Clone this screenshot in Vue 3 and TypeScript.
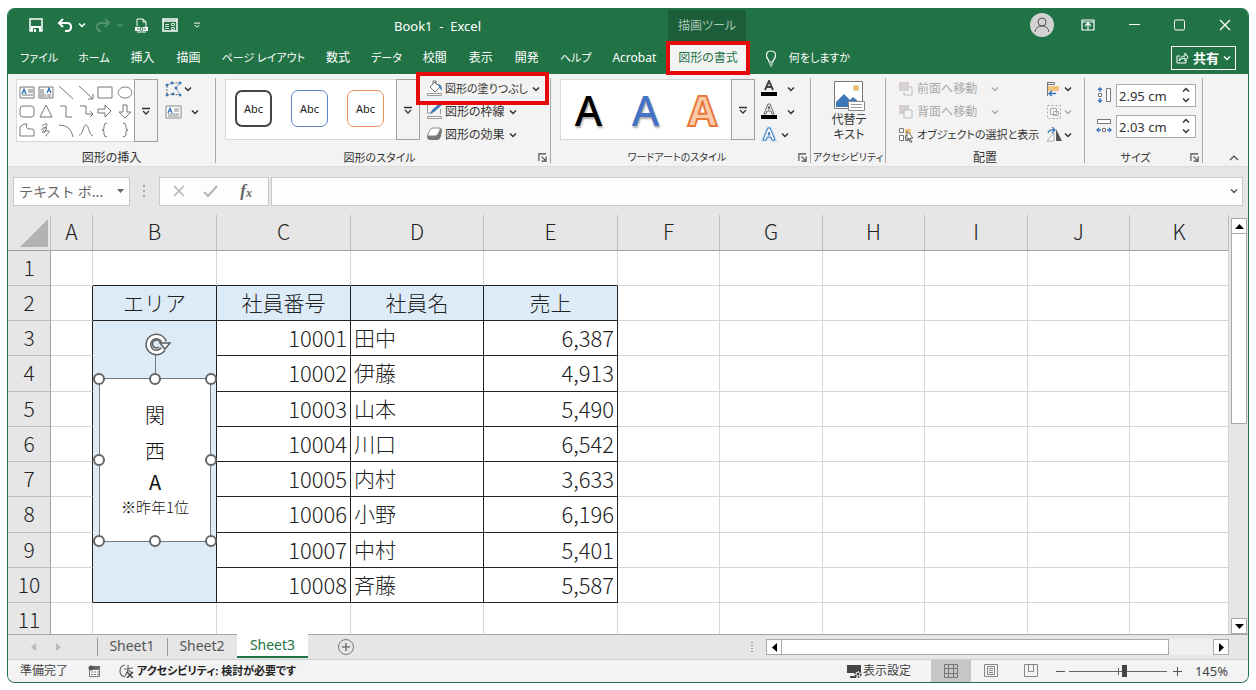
<script setup lang="ts">
import { ref } from 'vue'

interface Row { id: number; name: string; sales: string }
interface Tab { label: string; kana?: boolean }

const tabs: Tab[] = [
  { label: 'ファイル', kana: true }, { label: 'ホーム', kana: true }, { label: '挿入' }, { label: '描画' },
  { label: 'ページ レイアウト', kana: true }, { label: '数式' }, { label: 'データ', kana: true }, { label: '校閲' },
  { label: '表示' }, { label: '開発' }, { label: 'ヘルプ', kana: true }, { label: 'Acrobat' }, { label: '図形の書式' },
]
const activeTab = ref('図形の書式')
const sheets: string[] = ['Sheet1', 'Sheet2', 'Sheet3']
const activeSheet = ref('Sheet3')
const columns: string[] = ['A', 'B', 'C', 'D', 'E', 'F', 'G', 'H', 'I', 'J', 'K']
const headings: string[] = ['エリア', '社員番号', '社員名', '売上']
const rows: Row[] = [
  { id: 10001, name: '田中', sales: '6,387' },
  { id: 10002, name: '伊藤', sales: '4,913' },
  { id: 10003, name: '山本', sales: '5,490' },
  { id: 10004, name: '川口', sales: '6,542' },
  { id: 10005, name: '内村', sales: '3,633' },
  { id: 10006, name: '小野', sales: '6,196' },
  { id: 10007, name: '中村', sales: '5,401' },
  { id: 10008, name: '斉藤', sales: '5,587' },
]
const shapes: string[] = [
  'M1 3h14v11H1zM9 6h5M9 8h5M3 11h11', 'M1 3h14v11H1zM3 5v8M5 5v8M7 10v3M10 10v3M12 10v3', 'M1 2l14 13', 'M1 2l13 12M15 10v5h-5', 'M1 3h14v11H1z', 'M8 3c9 0 9 11 0 11s-9-11 0-11z',
  'M4 3h8q3 0 3 3v5q0 3-3 3H4q-3 0-3-3V6q0-3 3-3z', 'M8 2l6 12H2z', 'M2 3h6v11h6', 'M2 3h6v8h6M12 8l3 3-3 3', 'M1 6h7V2l6 6-6 6v-4H1z', 'M6 2h4v7h4l-6 6-6-6h4z',
  'M1 14V5l4-3h3q-2 5 3 5 4-1 4 2v5z', 'M4 4c8-6 5 1 1 5s8-3 6 1-5 3-2 4M3 8c5-5 8-3 3 3', 'M1 3q12 0 14 12', 'M1 13c4 0 4-10 7-10s3 11 7 11', 'M10 1q-3 0-3 3v2q0 2-2 2 2 0 2 2v2q0 3 3 3', 'M6 1q3 0 3 3v2q0 2 2 2-2 0-2 2v2q0 3-3 3',
]
const shapeHeight = ref('2.95 cm')
const shapeWidth = ref('2.03 cm')
const zoom = ref(145)
const handles: string[] = ['nw', 'n', 'ne', 'w', 'e', 'sw', 's', 'se']
</script>

<template>
  <svg class="defs" aria-hidden="true">
    <symbol id="chev" viewBox="0 0 8 8"><path d="M1 2.500l3 3 3-3" fill="none" stroke="currentColor" stroke-width="1.500" /></symbol>
    <symbol id="more" viewBox="0 0 8 8"><path d="M0 1.500h8M1 4l3 3 3-3" fill="none" stroke="currentColor" stroke-width="1.300" /></symbol>
    <symbol id="launch" viewBox="0 0 10 10"><path d="M1 9V1h8M4 4l4 4M9 4v5H4" fill="none" stroke="#444" stroke-width="1.200" /></symbol>
  </svg>
  <div class="window">
    <header class="titlebar">
      <div class="quick">
        <button aria-label="上書き保存"><svg width="14" height="14"><path d="M1 1h12v12H1z" fill="none" stroke="#fff" stroke-width="1.500" /><path d="M2 8h10v5H2z" fill="#fff" /><path d="M4 10h6v4H4z" fill="#217346" /><path d="M5 11h2v3H5z" fill="#fff" /></svg></button>
        <button aria-label="元に戻す"><svg width="16" height="14"><path d="M2 5h8q4 0 4 4t-4 4H8M6 1L2 5l4 4" fill="none" stroke="#fff" stroke-width="2" /></svg><svg class="chev"><use href="#chev" /></svg></button>
        <button class="redo" aria-label="やり直し" disabled><svg width="16" height="14"><path d="M14 5H6Q2 5 2 9t4 4M10 1l4 4-4 4" fill="none" stroke="currentColor" stroke-width="2" /></svg><svg class="chev"><use href="#chev" /></svg></button>
        <button class="pdf" aria-label="PDF"><svg width="13" height="15"><path d="M2 8V1h6l3 3v6M8 1v3h3M2 14h9" fill="none" stroke="#fff" /><path d="M0 9h13v4H0z" fill="#fff" /><path d="M2 11h2M9 11h2" stroke="#217346" /><circle cx="6.500" cy="11" r="1.500" fill="none" stroke="#217346" /></svg></button>
        <button aria-label="フォーム"><svg width="16" height="14"><path d="M1 1h14v12H1zM1 3h14" fill="none" stroke="#fff" stroke-width="1.500" /><path d="M3 6.500h4M3 8.500h4M3 10.500h4M9.500 5.500h3v2h-3zM9.500 9.500h3v2h-3z" fill="none" stroke="#fff" stroke-width=".8" /></svg></button>
        <button class="custom" aria-label="カスタマイズ"><svg class="tiny"><use href="#more" /></svg></button>
      </div>
      <div class="doc">Book1&nbsp; -&nbsp; Excel</div>
      <div class="context">描画ツール</div>
      <div class="winctl">
        <button class="avatar" aria-label="アカウント"><svg width="24" height="24"><circle cx="12" cy="12" r="12" fill="#d2d2d2" /><circle cx="12" cy="9" r="4" fill="none" stroke="#555" /><path d="M5 19q1-6 7-6t7 6" fill="none" stroke="#555" /></svg></button>
        <button aria-label="リボンの表示"><svg width="14" height="12"><path d="M1 1h12v10H1zM1 3h12M7 11V5M4 7l3-3 3 3" fill="none" stroke="#fff" stroke-width="1.200" /></svg></button>
        <button aria-label="最小化"><svg width="11" height="12"><path d="M0 5.500h11" stroke="#fff" /></svg></button>
        <button aria-label="最大化"><svg width="11" height="12"><rect x=".5" y="1" width="10" height="10" rx="1.500" fill="none" stroke="#fff" /></svg></button>
        <button aria-label="閉じる"><svg width="12" height="12"><path d="M1 1l10 10M11 1L1 11" stroke="#fff" stroke-width="1.300" /></svg></button>
      </div>
    </header>

    <nav class="tabs">
      <button v-for="t in tabs" :key="t.label" class="tab" :class="{ active: t.label === activeTab, kana: t.kana }" @click="activeTab = t.label">{{ t.label }}</button>
      <button class="tell"><svg width="12" height="17"><path d="M4 12q0-2-2-4-2-7 4-7t4 7q-2 2-2 4zM4 14h4M5 16h2" fill="none" stroke="#fff" stroke-width="1.200" /></svg>何をしますか</button>
      <button class="share"><svg width="13" height="12"><path d="M4 4H1v7h9V8M3 9q1-5 6-5V1l3 4-3 4V6Q5 6 3 9z" fill="none" stroke="#fff" /></svg>共有<svg class="chev"><use href="#chev" /></svg></button>
    </nav>

    <section class="ribbon">
      <div class="group g-insert">
        <div class="body">
          <div class="gallery">
            <div class="shapes">
              <button v-for="(s, i) in shapes" :key="i" :aria-label="'図形 ' + (i + 1)">
                <svg width="16" height="16" viewBox="0 0 16 16"><path :d="s" fill="none" stroke="#777" />
                  <path v-if="i === 0" d="M3 10l2-5 2 5M4 8h2" fill="none" stroke="#2e75b6" stroke-width="1.200" />
                  <path v-if="i === 1" d="M9 9l2-5 2 5M10 7h2" fill="none" stroke="#2e75b6" stroke-width="1.200" /></svg>
              </button>
            </div>
            <button class="expand" aria-label="その他の図形"><svg class="more"><use href="#more" /></svg></button>
          </div>
          <div class="stack edit">
            <button aria-label="図形の編集"><svg width="17" height="16"><path d="M2 4l5-2h8l-4 5 4 7-7-1-6 1z" fill="none" stroke="#777" stroke-dasharray="2 1" /><path d="M1 3h2v2H1zM6 1h2v2H6zM14 1h2v2h-2zM10 6h2v2h-2zM1 13h2v2H1zM7 12h2v2H7zM14 13h2v2h-2z" fill="#3b78b5" stroke="#3b78b5" stroke-width=".6" /></svg><svg class="chev"><use href="#chev" /></svg></button>
            <button class="textbox" aria-label="テキスト ボックス"><svg width="17" height="14"><path d="M1 1h15v12H1zM9 4h5M9 6h5M3 9h11M3 11h11" fill="#fff" stroke="#888" /><path d="M3 8l2-5 2 5M4 6h2" fill="none" stroke="#2e75b6" stroke-width="1.200" /></svg><svg class="chev"><use href="#chev" /></svg></button>
          </div>
        </div>
        <div class="caption"><span>図形の挿入</span></div>
      </div>

      <div class="group g-style">
        <div class="body">
          <div class="gallery">
            <div class="styles"><button class="abc dark">Abc</button><button class="abc blue">Abc</button><button class="abc orange">Abc</button></div>
            <button class="expand" aria-label="その他のスタイル"><svg class="more"><use href="#more" /></svg></button>
          </div>
          <div class="stack lines">
            <button class="marked compact"><svg width="18" height="17"><path d="M4 7l5-5 5 5-5 5zM7 4V1h3v4" fill="#fff" stroke="#777" /><path d="M12 4q4 0 4 7l-3-4z" fill="#3b78b5" /><path d="M1.500 13.500h14v2h-14z" fill="#fff" stroke="#999" /></svg>図形の塗りつぶし<svg class="chev"><use href="#chev" /></svg></button>
            <button><svg width="18" height="17"><path d="M1.500 2v8h5M14.500 6v5" fill="none" stroke="#999" /><path d="M4 11l2-4 8-7 2 2-8 7z" fill="#3b78b5" /><path d="M1.500 13.500h14v2h-14z" fill="#fff" stroke="#999" /></svg>図形の枠線<svg class="chev"><use href="#chev" /></svg></button>
            <button><svg width="18" height="17"><path d="M6 2h8q2 0 2 3l-1 5q-1 4-4 4H4q-3 0-3-4z" fill="#777" /><path d="M6 2h7q2 0 1 2l-2 4q-1 2-3 2H3q-2 0-1-2l2-4q1-2 2-2z" fill="#fff" stroke="#888" /></svg>図形の効果<svg class="chev"><use href="#chev" /></svg></button>
          </div>
        </div>
        <div class="caption compact"><span>図形のスタイル</span><button aria-label="図形の書式設定"><svg class="launch"><use href="#launch" /></svg></button></div>
      </div>

      <div class="group g-art">
        <div class="body">
          <div class="gallery">
            <div class="styles art"><button class="wa black">A</button><button class="wa blue">A</button><button class="wa orange">A</button></div>
            <button class="expand" aria-label="その他のワードアート"><svg class="more"><use href="#more" /></svg></button>
          </div>
          <div class="stack fx">
            <button aria-label="文字の塗りつぶし"><svg width="18" height="17"><path d="M5 10l4-9 4 9M6 7h6" fill="none" stroke="#444" stroke-width="2" /><path d="M1 12h16v4H1z" /></svg><svg class="chev"><use href="#chev" /></svg></button>
            <button aria-label="文字の輪郭"><svg width="18" height="17"><path d="M4 11l4-10h2l4 10h-2l-1-3H7l-1 3zM8 6l1-3 1 3z" fill="#fff" stroke="#666" /><path d="M1 12h16v4H1z" /></svg><svg class="chev"><use href="#chev" /></svg></button>
            <button class="near" aria-label="文字の効果"><svg width="18" height="17"><path d="M3 14L8 2h2l5 12h-3l-1-3H7l-1 3zM8 9l1-3 1 3z" fill="#fff" stroke="#b8d6f2" stroke-width="3" /><path d="M3 14L8 2h2l5 12h-3l-1-3H7l-1 3zM8 9l1-3 1 3z" fill="#fff" stroke="#3b78b5" /></svg><svg class="chev"><use href="#chev" /></svg></button>
          </div>
        </div>
        <div class="caption small"><span>ワードアートのスタイル</span><button aria-label="文字の書式設定"><svg class="launch"><use href="#launch" /></svg></button></div>
      </div>

      <div class="group g-alt">
        <div class="body">
          <button class="alt"><svg width="32" height="32"><path d="M1.500 1.500h28v27h-28z" fill="#fff" stroke="#777" /><circle cx="23" cy="8" r="3" fill="#e9b96e" /><path d="M3 27v-5l8-8 6 6 3-3 6 5v5z" fill="#3b78b5" /><path d="M15.500 21.500h16v9h-16z" fill="#fff" stroke="#888" /><path d="M18 24.500h11M18 27.500h11" stroke="#999" /></svg><span>代替テ</span><span>キスト</span></button>
        </div>
        <div class="caption small"><span>アクセシビリティ</span></div>
      </div>

      <div class="group g-arrange">
        <div class="body">
          <div class="stack lines">
            <button disabled><svg width="18" height="16"><path d="M9 6h5v8H6v-3" fill="none" stroke="#bbb" /><path d="M1 1h10v9H1z" fill="#d6d0d6" /></svg><span class="wide">前面へ移動</span><svg class="chev"><use href="#chev" /></svg></button>
            <button disabled><svg width="18" height="16"><path d="M1 1h10v9H1z" fill="#d6d0d6" /><path d="M6 6h8v8H6z" fill="#f3f3f3" stroke="#bbb" /></svg><span class="wide">背面へ移動</span><svg class="chev"><use href="#chev" /></svg></button>
            <button class="compact"><svg width="18" height="16"><path d="M7 2h6v5H7z" fill="#f0c47c" /><path d="M1.500 1.500h4v4h-4zM1.500 8.500h4v5h-4zM7.500 8.500h3v5h-3z" fill="#fff" stroke="#777" /><path d="M9 4l6 7h-3l2 4h-2l-1-4-2 2z" fill="#fff" stroke="#666" /></svg>オブジェクトの選択と表示</button>
          </div>
          <div class="stack fx">
            <button aria-label="配置"><svg width="16" height="16"><path d="M1.500 1v14M1.500 1.500h7v2h-7" fill="none" stroke="#777" /><path d="M2 5h11v5H2z" fill="#f0c47c" /><path d="M3 12.500h7M6 10l-3 2.500L6 15" fill="none" stroke="#3b78b5" stroke-width="1.500" /></svg><svg class="chev"><use href="#chev" /></svg></button>
            <button disabled aria-label="グループ化"><svg width="16" height="16"><path d="M1.500 1.500h13v13h-13z" fill="none" stroke="#aaa" stroke-dasharray="2 2" /><path d="M4.500 4.500h6v6h-6zM7.500 7.500h5v4h-5z" fill="none" stroke="#aaa" /></svg><svg class="chev"><use href="#chev" /></svg></button>
            <button aria-label="回転"><svg width="16" height="16"><path d="M10 2v12h6z" fill="#555" /><path d="M8 6v8H1z" fill="#fff" stroke="#aaa" /><path d="M2 6q1-4 6-3M6 0l3 3-3 3" fill="none" stroke="#3b78b5" stroke-width="1.300" /></svg><svg class="chev"><use href="#chev" /></svg></button>
          </div>
        </div>
        <div class="caption"><span>配置</span></div>
      </div>

      <div class="group g-size">
        <div class="body sizes">
          <div class="size"><label for="h" aria-label="図形の高さ"><svg width="16" height="17"><path d="M10.500 1.500h4v13h-4zM2.500 6.500h3v3h-3z" fill="#fff" stroke="#777" /><path d="M4 5V1M2 3l2-2 2 2M4 11v5M2 13l2 2 2-2" fill="none" stroke="#3b78b5" stroke-width="1.300" /></svg></label>
            <div class="spin"><input id="h" v-model="shapeHeight"><div><button aria-label="高さを増やす"><svg class="chev up"><use href="#chev" /></svg></button><button aria-label="高さを減らす"><svg class="chev"><use href="#chev" /></svg></button></div></div></div>
          <div class="size"><label for="w" aria-label="図形の幅"><svg width="16" height="17"><path d="M1.500 1.500h13v4h-13zM6.500 10.500h3v3h-3z" fill="#fff" stroke="#777" /><path d="M5 12H1M3 10l-2 2 2 2M11 12h4M13 10l2 2-2 2" fill="none" stroke="#3b78b5" stroke-width="1.300" /></svg></label>
            <div class="spin"><input id="w" v-model="shapeWidth"><div><button aria-label="幅を増やす"><svg class="chev up"><use href="#chev" /></svg></button><button aria-label="幅を減らす"><svg class="chev"><use href="#chev" /></svg></button></div></div></div>
        </div>
        <div class="caption compact"><span>サイズ</span><button aria-label="サイズの設定"><svg class="launch"><use href="#launch" /></svg></button></div>
      </div>
      <button class="collapse" aria-label="リボンを折りたたむ"><svg width="10" height="6"><path d="M1 5l4-4 4 4" fill="none" stroke="#444" stroke-width="1.200" /></svg></button>
    </section>

    <section class="formula">
      <div class="namebox"><input value="テキスト ボ..." aria-label="名前ボックス"><button aria-label="名前の一覧"><svg width="7" height="5"><path d="M0 0h7L3.500 4z" fill="#666" /></svg></button></div>
      <svg class="grip" width="4" height="14"><path d="M1 1h2v2H1zM1 6h2v2H1zM1 11h2v2H1z" fill="#a5a5a5" /></svg>
      <div class="fxbox">
        <button aria-label="キャンセル"><svg width="14" height="14"><path d="M2 2l10 10M12 2L2 12" stroke="#b5b5b5" stroke-width="1.500" /></svg></button>
        <button aria-label="入力"><svg width="15" height="14"><path d="M1 8l4 4 9-10" fill="none" stroke="#b5b5b5" stroke-width="2" /></svg></button>
        <button class="fn" aria-label="関数の挿入">f<small>x</small></button>
      </div>
      <div class="fxinput"><input aria-label="数式バー"><button aria-label="数式バーの展開"><svg class="chev"><use href="#chev" /></svg></button></div>
    </section>

    <main class="work">
      <table class="grid">
        <colgroup><col class="c-row"><col class="c-a"><col class="c-b"><col class="c-data"><col class="c-d"><col class="c-data"><col v-for="n in 5" :key="n" class="c-free"><col></colgroup>
        <thead><tr><th class="corner"><svg width="28" height="28"><path d="M28 0v28H0z" fill="#b2b2b2" /></svg></th><th v-for="c in columns" :key="c">{{ c }}</th></tr></thead>
        <tbody>
          <tr><th>1</th><td v-for="(c, i) in columns" :key="c" :class="{ under: i > 0 && i < 5 }" /></tr>
          <tr><th>2</th><td class="edge" /><td v-for="h in headings" :key="h" class="data head">{{ h }}</td><td v-for="n in 6" :key="n" /></tr>
          <tr v-for="(r, i) in rows" :key="r.id">
            <th>{{ i + 3 }}</th><td class="edge" />
            <td v-if="i === 0" rowspan="8" class="data area">
              <div class="shape">
                <span class="stem" />
                <svg class="rotate" width="28" height="24"><path d="M19 17a8 8 0 1 1 1-7" fill="none" stroke="#5f5f5f" stroke-width="6" /><path d="M19 17a8 8 0 1 1 1-7" fill="none" stroke="#fff" stroke-width="3" /><path d="M16 11h10l-5 6z" fill="#fff" stroke="#5f5f5f" stroke-width="1.500" /><path d="M15 15a4 4 0 1 1 1-5" fill="none" stroke="#5f5f5f" stroke-width="1.500" /></svg>
                <p>関</p><p>西</p><p class="latin">A</p><p class="note">※昨年1位</p>
                <i v-for="p in handles" :key="p" :class="p" />
              </div>
            </td>
            <td class="data num">{{ r.id }}</td><td class="data name">{{ r.name }}</td><td class="data num">{{ r.sales }}</td><td v-for="n in 6" :key="n" />
          </tr>
          <tr class="last"><th>11</th><td v-for="c in columns" :key="c" /></tr>
        </tbody>
      </table>
      <div class="vscroll">
        <button aria-label="上へ"><svg width="9" height="5"><path d="M0 5l4.500-5L9 5z" /></svg></button>
        <div class="thumb" />
        <button aria-label="下へ"><svg width="9" height="5"><path d="M0 0h9L4.500 5z" /></svg></button>
      </div>
    </main>

    <section class="sheets">
      <div class="nav"><button aria-label="前のシート"><svg width="5" height="8"><path d="M5 0v8L0 4z" fill="#bbb" /></svg></button><button aria-label="次のシート"><svg width="5" height="8"><path d="M0 0v8l5-4z" fill="#bbb" /></svg></button></div>
      <button v-for="s in sheets" :key="s" class="sheet" :class="{ active: s === activeSheet }" @click="activeSheet = s">{{ s }}</button>
      <button class="add" aria-label="新しいシート"><svg width="18" height="18"><circle cx="9" cy="9" r="7.500" fill="none" stroke="#777" /><path d="M5 9h8M9 5v8" stroke="#777" stroke-width="1.500" /></svg></button>
      <svg class="hgrip" width="4" height="13"><path d="M1 1h2v1H1zM1 4h2v1H1zM1 7h2v1H1zM1 10h2v1H1z" fill="#999" /></svg>
      <div class="hscroll">
        <button aria-label="左へ"><svg width="5" height="9"><path d="M5 0v9L0 4.500z" /></svg></button>
        <div class="thumb" /><div class="track" />
        <button aria-label="右へ"><svg width="5" height="9"><path d="M0 0v9l5-4.500z" /></svg></button>
      </div>
    </section>

    <footer class="status">
      <span class="ready">準備完了</span>
      <svg class="macro" width="13" height="13"><path d="M1.500 4.500h10v7h-10z" fill="#fff" stroke="#777" /><path d="M5 1h7v3H5z" fill="#666" /><circle cx="3" cy="3" r="2.500" fill="#555" /><path d="M3 7h2M6 7h2M9 7h2M3 9.500h2M6 9.500h2M9 9.500h2" stroke="#777" /></svg>
      <button class="a11y"><svg width="16" height="14"><path d="M6 1Q1 2 1 7t5 6M5 5l9-1M9 1v5l4 3M9 6l-3 6" fill="none" stroke="#666" stroke-width="1.200" /><path d="M8 8l6 6M14 8l-6 6" stroke="#444" stroke-width="1.500" /></svg>アクセシビリティ: 検討が必要です</button>
      <button class="display"><svg width="17" height="15"><path d="M1 1h14v8H1zM4 12h6v2H4z" fill="#444" /><circle cx="12" cy="10" r="3" fill="#f3f3f3" stroke="#444" stroke-width="1.500" stroke-dasharray="2 1" /><circle cx="12" cy="10" r="1.500" fill="#444" /></svg>表示設定</button>
      <button class="view on" aria-label="標準"><svg width="14" height="14"><path d="M.5.5h13v13H.5zM4.500.5v13M9.500.5v13M.5 4.500h13M.5 9.500h13" fill="none" stroke="#777" /></svg></button>
      <button class="view" aria-label="ページ レイアウト"><svg width="14" height="14"><path d="M.5.5h13v12H.5zM3.500 2.500h7v8h-7zM5 4.500h4M5 6.500h4M5 8.500h4" fill="none" stroke="#888" /></svg></button>
      <button class="view" aria-label="改ページ プレビュー"><svg width="14" height="14"><path d="M.5.5h13v12H.5zM4.500.5v7h5v-7" fill="none" stroke="#888" /></svg></button>
      <button class="zb minus" aria-label="縮小"><svg width="9" height="9"><path d="M0 4.500h9" stroke="#555" /></svg></button>
      <input v-model="zoom" class="slider" type="range" min="-61" max="300" aria-label="ズーム">
      <button class="zb" aria-label="拡大"><svg width="9" height="9"><path d="M0 4.500h9M4.500 0v9" stroke="#555" /></svg></button>
      <span class="pct">{{ zoom }}%</span>
    </footer>
  </div>
</template>

<style>
body { margin: 0; background: #fff; }
</style>

<style scoped>
* { box-sizing: border-box; }
.defs { position: absolute; width: 0; height: 0; }
.window { margin: 8px 7px; border: 1px solid #217346; border-top: 0; border-radius: 8px; overflow: hidden; background: #e6e6e6; font: 12px/18px "Noto Sans", "Noto Sans CJK JP", sans-serif; font-feature-settings: "palt"; color: #333; }
button, input { font: inherit; font-feature-settings: inherit; color: inherit; background: none; border: 0; padding: 0; margin: 0; white-space: nowrap; }
button { display: flex; align-items: center; justify-content: center; flex: none; }
input { min-width: 0; outline: 0; }
svg { flex: none; display: block; }
.chev { width: 8px; height: 8px; }
.more { width: 8px; height: 8px; }
.launch { width: 9px; height: 9px; }
.up { transform: rotate(180deg); }
.compact { font-size: 11px; }
.small { font-size: 10px; }

.titlebar { display: flex; align-items: center; height: 34px; background: #217346; color: #fff; }
.quick { display: flex; align-items: center; width: 386px; padding-left: 21px; gap: 14px; }
.quick .chev { margin-left: 5px; }
.redo { margin-left: -5px; }
.pdf { margin-left: -3px; }
.custom { margin-left: 2px; }
.tiny { width: 6px; height: 6px; }
.doc { width: 274px; font-size: 13px; padding-top: 2px; }
.context { align-self: end; width: 78px; height: 32px; line-height: 32px; background: #1b5e39; color: #a9c7b6; text-align: center; }
.winctl { margin-left: auto; display: flex; align-items: center; padding-right: 17px; gap: 34px; }
.avatar { margin-right: -7px; }

.tabs { position: relative; display: flex; align-items: center; height: 32px; background: #217346; color: #fff; padding-left: 2px; }
.tab { height: 32px; padding: 0 11px; }
.tab.kana { padding: 0 10px; font-size: 11px; }
.tab.active { position: relative; z-index: 3; background: #f3f3f3; color: #217346; outline: 4px solid #e60b0b; outline-offset: -3px; }
.tell { margin-left: 16px; gap: 12px; font-size: 11px; }
.share { margin-left: auto; margin-right: 12px; width: 65px; height: 24px; border: 1px solid #fff; font-size: 13px; font-weight: 700; gap: 4px; }

.ribbon { display: flex; height: 93px; padding: 4px 0; background: #f3f3f3; border-bottom: 1px solid #dcdcdc; }
.group { display: flex; flex-direction: column; justify-content: space-between; flex: none; border-right: 1px solid #a8a8a8; height: 85px; }
.body { display: flex; align-items: flex-start; height: 70px; }
.caption { display: flex; align-items: center; height: 11px; line-height: 11px; }
.caption span { flex: 1; text-align: center; white-space: nowrap; }
.caption button { width: 16px; height: 11px; }
.gallery { display: flex; margin-top: 1px; height: 61px; background: #fff; border: 1px solid #d8d8d8; }
.expand { width: 24px; margin: -1px; background: #f3f3f3; border: 1px solid #a0a0a0; }
.stack { display: flex; flex-direction: column; margin-top: -1px; }
.stack button { height: 23px; justify-content: flex-start; }
.g-insert { width: 208px; padding-left: 8px; }
.g-insert .gallery { height: 63px; }
.g-insert .caption { padding-right: 8px; }
.shapes { display: grid; grid-template-columns: repeat(6, 1fr); width: 118px; padding: 2px 0; align-items: center; }
.edit { margin-left: 7px; }
.edit button { gap: 2px; }
.edit .textbox { gap: 9px; }
.g-style { width: 335px; padding-left: 9px; }
.styles { display: flex; align-items: center; width: 171px; padding-left: 9px; gap: 19px; }
.abc { width: 37px; height: 37px; border: 1px solid #444; border-radius: 7px; font-size: 11px; color: #222; margin-bottom: 2px; }
.abc.dark { border-width: 2px; }
.abc.blue { border-color: #5b84cc; }
.abc.orange { border-color: #e9935a; }
.lines { margin-left: 6px; }
.lines button { gap: 1px; }
.lines .chev { margin-left: 3px; }
.marked { position: relative; z-index: 2; }
.marked::after { content: ""; position: absolute; z-index: -1; inset: -5px -9px -5px -10px; background: #f3f3f3; border: 4px solid #e60b0b; }
.g-art { width: 260px; padding-left: 9px; }
.art { padding-left: 12px; gap: 26px; }
.wa { width: 31px; font-size: 42px; line-height: 50px; font-weight: 500; color: #000; text-shadow: 1px 2px 2px #aaa; }
.wa.blue { color: #4472c4; }
.wa.orange { color: #f8cbad; -webkit-text-stroke: 2px #e8793a; font-weight: 700; text-shadow: none; }
.fx { margin-left: 5px; }
.fx button { gap: 9px; }
.fx .near { gap: 3px; }
.g-alt { width: 75px; }
.g-alt .body { justify-content: center; }
.alt { flex-direction: column; line-height: 15px; padding: 2px 0 0 2px; }
.g-arrange { width: 199px; }
.g-arrange .lines { margin-left: 12px; width: 140px; }
.wide { width: 70px; text-align: left; }
button:disabled { color: #aaa; }
.titlebar .redo:disabled { color: #4f9070; }
.g-arrange .fx { margin-left: 8px; }
.g-arrange .fx button { gap: 2px; }
.g-size { width: 118px; }
.sizes { flex-direction: column; padding: 6px 6px 0 11px; gap: 8px; }
.size { display: flex; align-items: center; gap: 4px; width: 100%; }
.spin { display: flex; flex: 1; min-width: 0; height: 23px; background: #fff; border: 1px solid #ababab; }
.spin input { flex: 1; width: 50px; padding-left: 2px; font-size: 13px; }
.spin button { width: 18px; height: 10px; }
.collapse { margin-left: auto; align-self: flex-end; width: 28px; height: 8px; }

.formula { display: flex; align-items: center; height: 48px; padding: 0 5px; }
.namebox, .fxbox, .fxinput { display: flex; align-items: center; height: 29px; background: #fdfdfd; border: 1px solid #c9c9c9; }
.namebox { width: 117px; padding: 0 5px; font-size: 14px; font-feature-settings: normal; color: #666; }
.namebox input { flex: 1; font-family: "Noto Sans CJK JP", sans-serif; }
.grip { margin: 0 13px 0 12px; }
.fxbox { width: 110px; justify-content: space-around; padding: 0 3px; }
.fn { font: italic 700 17px "Liberation Serif", serif; color: #666; width: 20px; }
.fn small { font-size: 12px; padding-top: 4px; }
.fxinput { flex: 1; margin-left: 2px; }
.fxinput input { flex: 1; height: 100%; }
.fxinput button { width: 16px; color: #555; }

.work { display: flex; }
.grid { flex: 1; min-width: 0; width: 100%; table-layout: fixed; border-collapse: separate; border-spacing: 0; background: #fff; font: 300 21px/30px "Noto Sans CJK JP", sans-serif; font-feature-settings: normal; color: #222; }
.c-row { width: 43px; }
.c-a { width: 42px; }
.c-b { width: 124px; }
.c-data { width: 134px; }
.c-d { width: 133px; }
.c-free { width: 102px; }
.c-free:nth-child(even) { width: 103px; }
th, td { height: 35px; padding: 0 0 3px; border-right: 1px solid #d6d6d6; border-bottom: 1px solid #d6d6d6; font-weight: 300; white-space: nowrap; }
tbody tr:nth-child(4n) > * { height: 36px; }
th { background: #e6e6e6; border-color: #bdbdbd; text-align: center; }
thead th { height: 36px; border-bottom-color: #a0a0a0; }
th.corner { padding: 0; }
th.corner svg { margin: 1px 2px 0 auto; }
tbody th { border-right-color: #a0a0a0; }
td.under { border-bottom-color: #222; }
td.edge { border-right-color: #222; }
td.data { border-color: #222; }
.head { background: #ddebf7; text-align: center; }
.area { position: relative; background: #ddebf7; }
td.num { text-align: right; padding-right: 3px; font-size: 22px; }
td.name { padding-left: 3px; }
tr.last > * { height: 31px; padding: 0; border-bottom: 0; }
.shape { position: absolute; top: 57px; left: 6px; right: 5px; height: 164px; padding-top: 18px; background: #fff; border: 1px solid #777; text-align: center; color: #111; }
.shape p { margin: 0; font-size: 20px; line-height: 36px; }
.shape .latin { line-height: 26px; font-weight: 400; }
.shape .note { font-size: 15px; line-height: 24px; }
.stem { position: absolute; left: 55px; top: -26px; height: 20px; width: 1px; background: #777; }
.rotate { position: absolute; left: 44px; top: -47px; }
.shape i { position: absolute; width: 12px; height: 12px; border: 2px solid #666; border-radius: 50%; background: #fff; }
.nw, .n, .ne { top: -6px; }
.w, .e { top: 75px; }
.sw, .s, .se { bottom: -6px; }
.shape .nw, .shape .w, .shape .sw { left: -7px; }
.shape .n, .shape .s { left: 49px; }
.shape .ne, .shape .e, .shape .se { right: -7px; }

.vscroll { display: flex; flex-direction: column; flex: none; width: 19px; padding: 3px 1px 0 2px; }
.vscroll button, .hscroll button { width: 16px; height: 16px; background: #fff; border: 1px solid #aaa; }
.thumb { background: #fff; border: 1px solid #aaa; }
.vscroll .thumb { width: 16px; flex: 0 0 46%; margin-top: -1px; }
.vscroll button:last-child { margin-top: auto; }

.sheets { display: flex; height: 26px; border-top: 1px solid #a0a8a3; border-bottom: 1px solid #cfcfcf; font-size: 14px; color: #555; }
.nav { display: flex; width: 89px; padding-left: 23px; gap: 20px; }
.sheet { width: 70px; height: 23px; position: relative; padding-bottom: 1px; }
.sheet:not(.active)::before { content: ""; position: absolute; left: 0; top: 3px; height: 18px; border-left: 1px solid #999; }
.sheet.active { width: 71px; margin-top: -1px; height: 24px; background: #fff; color: #217346; border-bottom: 2px solid #217346; padding: 0; }
.add { margin: 0 auto 0 29px; }
.hgrip { align-self: center; margin-right: 12px; }
.hscroll { display: flex; align-items: center; flex: 0 1 463px; margin-right: 19px; }
.hscroll .thumb { height: 16px; flex: 1; margin-left: -1px; }
.track { width: 44px; height: 16px; background: #f0f0f0; }

.status { display: flex; align-items: center; height: 22px; padding-right: 20px; background: #f3f3f3; color: #444; }
.ready { padding-left: 12px; }
.macro { margin: 0 18px 0 20px; }
.a11y { font-size: 11px; font-weight: 700; color: #222; gap: 2px; }
.display { margin-left: auto; margin-right: 20px; }
.view { width: 40px; height: 22px; }
.view.on { background: #c6c6c6; }
.zb { width: 20px; }
.zb.minus { width: 18px; }
.slider { appearance: none; width: 98px; height: 14px; background: linear-gradient(#666, #666) center / 100% 1px no-repeat, linear-gradient(#666, #666) 50% 50% / 1px 7px no-repeat; }
.slider::-webkit-slider-thumb { appearance: none; width: 5px; height: 12px; background: #444; }
.pct { width: 41px; text-align: right; font-size: 13px; }
</style>
